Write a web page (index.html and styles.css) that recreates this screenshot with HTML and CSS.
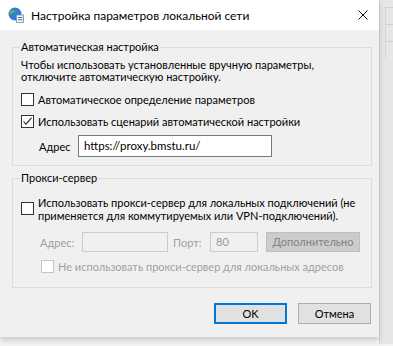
FILE: index.html
```html
<!DOCTYPE html>
<html lang="ru">
<head>
    <meta charset="UTF-8">
    <meta name="viewport" content="width=device-width, initial-scale=1.0">
    <title>Настройка параметров локальной сети</title>
    <link rel="stylesheet" href="styles.css">
</head>
<body>
    <div class="screen">
        <div class="dialog">
            <div class="titlebar">
                <svg class="app-icon" width="16" height="16" viewBox="0 0 16 16">
                    <circle cx="7" cy="7" r="6.5" fill="#2f7fd6"/>
                    <path d="M3 3.5 C5 2.5 7 3 7.5 4.5 C6 5.5 4.5 5 4 7 C3 8 2 7 1.2 6 C1.5 5 2 4 3 3.5 Z" fill="#5cb83a"/>
                    <path d="M9 8 C10.5 7.5 12 8.5 12.5 9.5 C11.5 11 10 12.5 8.5 13 C8.5 11.5 8 9.5 9 8 Z" fill="#5cb83a"/>
                    <rect x="8.5" y="8" width="7" height="7.5" fill="#f4f6f8" stroke="#7a8a9c" stroke-width="0.8"/>
                    <rect x="10" y="10" width="4.5" height="1" fill="#3a74c4"/>
                    <rect x="10" y="12.3" width="4.5" height="1" fill="#3a74c4"/>
                </svg>
                <span class="title">Настройка параметров локальной сети</span>
                <svg class="close" width="10" height="10" viewBox="0 0 10 10">
                    <path d="M0.5 0.5 L9.5 9.5 M9.5 0.5 L0.5 9.5" stroke="#111" stroke-width="1"/>
                </svg>
            </div>

            <div class="body">
                <fieldset class="group group-auto">
                    <legend>Автоматическая настройка</legend>
                    <p class="note">Чтобы использовать установленные вручную параметры,<br>отключите автоматическую настройку.</p>
                    <div class="check-row first">
                        <span class="box"></span>
                        <span>Автоматическое определение параметров</span>
                    </div>
                    <div class="check-row">
                        <span class="box">
                            <svg width="11" height="11" viewBox="0 0 11 11">
                                <path d="M1.5 5.5 L4 8.2 L9.5 1.8" fill="none" stroke="#222" stroke-width="1.1"/>
                            </svg>
                        </span>
                        <span>Использовать сценарий автоматической настройки</span>
                    </div>
                    <div class="addr-row">
                        <span class="addr-label">Адрес</span>
                        <div class="field">https://proxy.bmstu.ru/</div>
                    </div>
                </fieldset>

                <fieldset class="group group-proxy">
                    <legend>Прокси-сервер</legend>
                    <div class="check-row multi">
                        <span class="box"></span>
                        <span>Использовать прокси-сервер для локальных подключений (не<br>применяется для коммутируемых или VPN-подключений).</span>
                    </div>
                    <div class="proxy-row">
                        <span class="muted addr-caption">Адрес:</span>
                        <div class="field disabled addr"></div>
                        <span class="muted port-caption">Порт:</span>
                        <div class="field disabled port">80</div>
                        <div class="btn btn-disabled">Дополнительно</div>
                    </div>
                    <div class="check-row muted bypass">
                        <span class="box box-disabled"></span>
                        <span>Не использовать прокси-сервер для локальных адресов</span>
                    </div>
                </fieldset>

                <div class="actions">
                    <div class="btn btn-default">OK</div>
                    <div class="btn">Отмена</div>
                </div>
            </div>
        </div>
        <div class="behind">
            <div class="behind-cell"></div>
            <div class="behind-cell"></div>
            <div class="behind-cell"></div>
        </div>
    </div>
</body>
</html>
```

FILE: styles.css
```css
body {
    margin: 0;
    background-color: #f3f3f3;
    font-family: Lato, "Liberation Sans", sans-serif;
    font-size: 11px;
    color: #000;
    white-space: nowrap;
}
.screen {
    display: flex;
    height: 346px;
    overflow: hidden;
}
.dialog {
    width: 379px;
    height: 337px;
    flex-shrink: 0;
    background-color: #f0f0f0;
    box-shadow: 0 3px 6px rgba(0,0,0,0.18);
    position: relative;
    z-index: 1;
}
.behind {
    flex: 1;
    height: 337px;
    background-color: #e6e6e6;
    border-left: 1px solid #d6d6d6;
    display: flex;
    flex-direction: column;
    padding-top: 7px;
}
.behind-cell {
    height: 16px;
    border-top: 1px solid #cfcfcf;
    border-left: 1px solid #d4d4d4;
    margin-left: 5px;
}
.titlebar {
    height: 30px;
    background-color: #fff;
    display: flex;
    align-items: center;
    padding: 0 11px 0 8px;
}
.app-icon {
    margin-right: 7px;
}
.title {
    flex: 1;
    font-size: 12px;
}
.body {
    padding: 9px 8px 0 12px;
}
.group {
    margin: 0;
    padding: 0 0 0 7px;
    width: 360px;
    box-sizing: border-box;
    border: 1px solid #dcdcdc;
}
.group legend {
    padding: 0 1px;
    margin-left: 0;
    line-height: 16px;
}
.group-auto {
    height: 127px;
}
.group-proxy {
    margin-top: 4px;
    height: 118px;
}
.note {
    margin: 4px 0 0 1px;
    line-height: 12px;
}
.check-row {
    display: flex;
    align-items: center;
    line-height: 13px;
    margin-top: 9px;
}
.check-row.first {
    margin-top: 10px;
}
.check-row.multi {
    align-items: flex-start;
    margin-top: 10px;
}
.box {
    width: 11px;
    height: 11px;
    border: 1px solid #333;
    background-color: #fff;
    margin: 0 4px 0 1px;
    flex-shrink: 0;
    display: flex;
    align-items: center;
    justify-content: center;
}
.check-row.multi .box {
    margin-top: 6px;
}
.box-disabled {
    border-color: #c4c4c4;
}
.addr-row {
    display: flex;
    align-items: center;
    margin-top: 7px;
}
.addr-label {
    width: 39px;
    padding-left: 19px;
}
.field {
    border: 1px solid #7a7a7a;
    background-color: #fff;
    width: 194px;
    height: 22px;
    box-sizing: border-box;
    padding: 0 5px;
    line-height: 20px;
    font-size: 11.5px;
}
.proxy-row {
    display: flex;
    align-items: center;
    margin-top: 10px;
}
.muted {
    color: #a0a0a0;
}
.addr-caption {
    padding-left: 20px;
    width: 42px;
}
.port-caption {
    width: 32px;
}
.field.disabled {
    border-color: #cccccc;
    background-color: #f0f0f0;
    color: #9a9a9a;
    height: 20px;
    line-height: 18px;
    font-size: 11px;
}
.field.addr {
    width: 86px;
    margin-right: 5px;
}
.field.port {
    width: 48px;
    margin-left: 5px;
    margin-right: 8px;
}
.btn {
    border: 1px solid #adadad;
    background-color: #e1e1e1;
    text-align: center;
    box-sizing: border-box;
    width: 73px;
    height: 21px;
    line-height: 19px;
}
.btn-disabled {
    width: 94px;
    height: 20px;
    line-height: 18px;
    background-color: #cccccc;
    border-color: #bfbfbf;
    color: #838383;
}
.bypass {
    margin-top: 8px;
    padding-left: 20px;
}
.actions {
    display: flex;
    justify-content: flex-end;
    gap: 11px;
    margin-top: 15px;
}
.btn-default {
    border: 2px solid #0078d7;
    line-height: 17px;
}
```
